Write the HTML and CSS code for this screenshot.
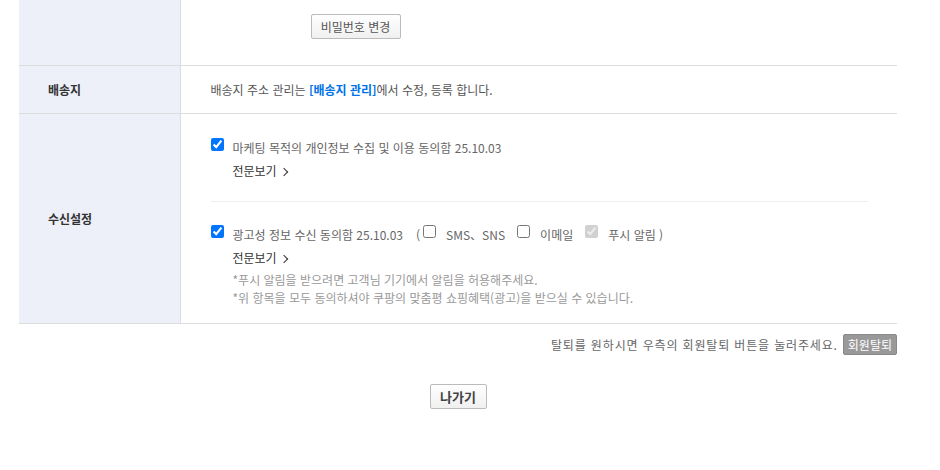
FILE: index.html
```html
<!doctype html>
<html lang="ko">
<head>
	<meta charset="UTF-8">
	<title>회원정보 수정</title>
	<link rel="stylesheet" href="styles.css">
</head>
<body>
	<div class="wrap">
		<table class="info">
			<tr class="row-pw">
				<th></th>
				<td><button type="button" class="btn btn-pw">비밀번호 변경</button></td>
			</tr>
			<tr class="row-addr">
				<th>배송지</th>
				<td>배송지 주소 관리는 <a class="link" href="#">[배송지 관리]</a>에서 수정, 등록 합니다.</td>
			</tr>
			<tr class="row-recv">
				<th>수신설정</th>
				<td>
					<div class="agree agree-first">
						<label class="chk-line"><input type="checkbox" checked> 마케팅 목적의 개인정보 수집 및 이용 동의함 25.10.03</label>
						<a class="more" href="#">전문보기 <span class="arrow"></span></a>
					</div>
					<div class="agree agree-second">
						<div class="chk-line">
							<label><input type="checkbox" checked> 광고성 정보 수신 동의함 25.10.03</label>
							<span class="paren">(</span><label class="sub"><input type="checkbox"> SMS、SNS</label>
							<label class="sub"><input type="checkbox"> 이메일</label>
							<label class="sub"><input type="checkbox" checked disabled> 푸시 알림 )</label>
						</div>
						<a class="more" href="#">전문보기 <span class="arrow"></span></a>
						<p class="note">*푸시 알림을 받으려면 고객님 기기에서 알림을 허용해주세요.</p>
						<p class="note">*위 항목을 모두 동의하셔야 쿠팡의 맞춤평 쇼핑혜택(광고)을 받으실 수 있습니다.</p>
					</div>
				</td>
			</tr>
		</table>
		<div class="leave">
			탈퇴를 원하시면 우측의 회원탈퇴 버튼을 눌러주세요.
			<button type="button" class="btn-leave">회원탈퇴</button>
		</div>
		<div class="bottom">
			<button type="button" class="btn btn-out">나가기</button>
		</div>
	</div>
</body>
</html>
```

FILE: styles.css
```css
*{
	box-sizing:border-box;
}
body{
	margin:0px;
	font-family:"Noto Sans CJK KR", "Noto Sans", sans-serif;
	font-size:12px;
	color:#555555;
	background:#FFFFFF;
}
.wrap{
	width:878px;
	margin-left:19px;
}
.info{
	width:100%;
	border-collapse:collapse;
}
.info th{
	width:161px;
	background:#EDF0F8;
	border-right:1px solid #DDDDDD;
	border-bottom:1px solid #DDDDDD;
	text-align:left;
	padding:0px 0px 0px 29px;
	font-size:12px;
	font-weight:bold;
	color:#333333;
	vertical-align:middle;
}
.info td{
	border-bottom:1px solid #DDDDDD;
	padding:0px 29px 0px 30px;
	vertical-align:middle;
}
.row-pw td{
	height:65px;
	vertical-align:top;
	padding-top:14px;
}
.row-addr td{
	height:48px;
}
.btn{
	font-family:inherit;
	height:25px;
	padding:0px 8px;
	border:1px solid #BBBBBB;
	border-radius:2px;
	background:linear-gradient(#FFFFFF, #F0F0F0);
	color:#555555;
	font-size:12px;
	cursor:pointer;
}
.btn-pw{
	width:90px;
	margin-left:100px;
}
.link{
	color:#0073E9;
	font-weight:bold;
	text-decoration:none;
}
.agree{
	padding-bottom:20px;
}
.agree-first{
	padding-top:24px;
	border-bottom:1px solid #EEEEEE;
}
.agree-second{
	padding-top:23px;
	padding-bottom:16px;
}
.chk-line{
	display:flex;
	align-items:center;
	height:20px;
	line-height:20px;
	color:#666666;
}
.chk-line label{
	display:flex;
	align-items:center;
}
.chk-line input{
	width:13px;
	height:13px;
	margin:0px 9px 7px 0px;
}
.paren{
	margin-left:13px;
	margin-right:3px;
}
.sub{
	margin-right:12px;
}
.sub input{
	margin-right:10px;
}
.more{
	display:block;
	margin:3px 0px 0px 22px;
	line-height:20px;
	color:#333333;
	text-decoration:none;
}
.arrow{
	display:inline-block;
	width:6px;
	height:6px;
	border-top:1px solid #333333;
	border-right:1px solid #333333;
	transform:rotate(45deg);
	margin-left:1px;
	vertical-align:1px;
}
.note{
	margin:0px 0px 0px 22px;
	line-height:18px;
	color:#999999;
	font-size:12px;
}
.agree-second .more{
	margin-bottom:3px;
}
.leave{
	display:flex;
	justify-content:flex-end;
	align-items:center;
	margin-top:10px;
	color:#666666;
	font-size:12px;
	letter-spacing:0.85px;
}
.btn-leave{
	font-family:inherit;
	height:21px;
	margin-left:5px;
	padding:0px 4px;
	background:#999999;
	border:1px solid #888888;
	border-radius:2px;
	color:#FFFFFF;
	font-size:12px;
	letter-spacing:0px;
}
.bottom{
	text-align:center;
	margin-top:29px;
}
.btn-out{
	width:57px;
	font-size:13px;
	font-weight:bold;
	color:#444444;
}
```
